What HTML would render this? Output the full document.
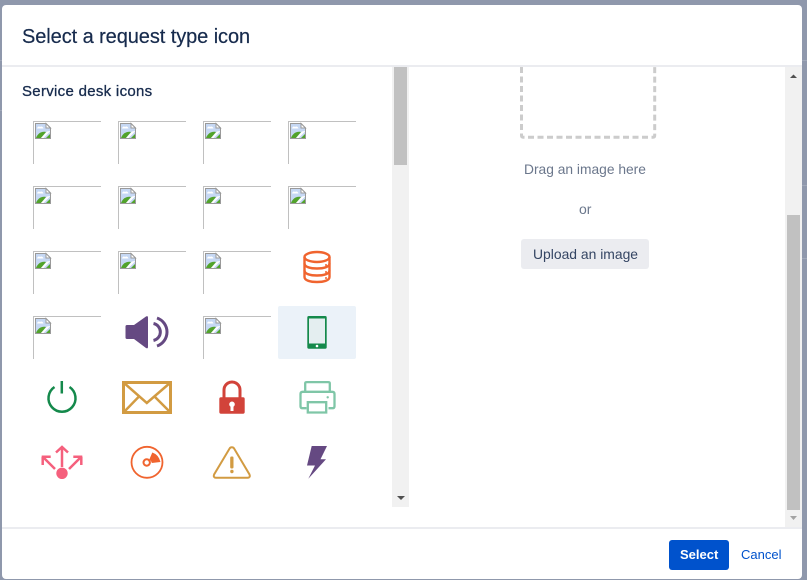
<!DOCTYPE html>
<html lang="en">
<head>
<meta charset="utf-8">
<title>Select a request type icon</title>
<style>
html,body{margin:0;padding:0;width:807px;height:580px;overflow:hidden;background:#8f98ac;font-family:"Liberation Sans",sans-serif}
.abs{position:absolute;white-space:nowrap}
#modal{position:absolute;left:2px;top:5px;width:800px;height:574px;background:#fff;border-radius:4px}
svg#art{position:absolute;left:0;top:0}
</style>
</head>
<body>
<div class="abs" style="left:0;top:60px;width:2px;height:1px;background:#a0a8b9"></div>
<div class="abs" style="left:0;top:110px;width:2px;height:1px;background:#a0a8b9"></div>
<div class="abs" style="left:802px;top:60px;width:5px;height:1px;background:#a0a8b9"></div>
<div class="abs" style="left:802px;top:185px;width:5px;height:1px;background:#a0a8b9"></div>
<div class="abs" style="left:802px;top:258px;width:5px;height:1px;background:#a0a8b9"></div>
<div id="modal"></div>

<svg id="art" width="807" height="580" viewBox="0 0 807 580" xmlns="http://www.w3.org/2000/svg">
<defs>
<g id="broken">
  <path d="M.5 43V.5H68" fill="none" stroke="#c0c0c0"/>
  <g transform="translate(2,2)">
    <path d="M.5.5H11L15.500 5V15.500H.5Z" fill="#c6d8f4" stroke="#9a9a9a"/>
    <path d="M11 .5V5H15.500Z" fill="#fff" stroke="#9a9a9a"/>
    <path d="M2 5.500c.5-2 2-2.500 3-1.500c1-1 3-.5 3.500 1.500Z" fill="#fff"/>
    <path d="M1 15c1.500-4 5-7 10-6l-5 6Z" fill="#52a32c"/>
    <path d="M6 15l6-6.500 3-.5v.5l-6.500 6.500Z" fill="#fff"/>
    <path d="M11 15l4-4v4Z" fill="#52a32c"/>
  </g>
</g>
</defs>

<!-- dividers -->
<rect x="2" y="65" width="800" height="2" fill="#ebecf0"/>
<rect x="2" y="527" width="800" height="2" fill="#ebecf0"/>

<!-- left scrollbar -->
<rect x="392" y="67" width="17" height="440" fill="#f1f1f1"/>
<rect x="394" y="67" width="13" height="98" fill="#c1c1c1"/>
<path d="M397 496h8l-4 4Z" fill="#505050"/>

<!-- right scrollbar -->
<rect x="785" y="67" width="17" height="460" fill="#f1f1f1"/>
<rect x="787" y="215" width="13" height="295" fill="#c1c1c1"/>
<path d="M790 78h7l-3.500-3.500Z" fill="#505050"/>
<path d="M790 516h7l-3.500 4Z" fill="#a3a3a3"/>

<!-- selected cell -->
<rect x="278" y="306" width="78" height="53" rx="2" fill="#ebf2f9"/>

<!-- broken images -->
<use href="#broken" x="33" y="121"/><use href="#broken" x="118" y="121"/><use href="#broken" x="203" y="121"/><use href="#broken" x="288" y="121"/>
<use href="#broken" x="33" y="186"/><use href="#broken" x="118" y="186"/><use href="#broken" x="203" y="186"/><use href="#broken" x="288" y="186"/>
<use href="#broken" x="33" y="251"/><use href="#broken" x="118" y="251"/><use href="#broken" x="203" y="251"/>
<use href="#broken" x="33" y="316"/><use href="#broken" x="203" y="316"/>

<!-- database -->
<g fill="none" stroke="#f0642f" stroke-width="2.400">
  <ellipse cx="317" cy="257" rx="12.500" ry="5"/>
  <path d="M304.500 257V277c0 3.500 6 5 12.500 5S329.500 280.500 329.500 277V257"/>
  <path d="M304.500 263.500c0 3.500 6 5 12.500 5S329.500 267 329.500 263.500"/>
  <path d="M304.500 270.500c0 3.500 6 5 12.500 5S329.500 274 329.500 270.500"/>
</g>
<g fill="#f0642f"><circle cx="326" cy="265" r="1"/><circle cx="326" cy="272" r="1"/><circle cx="326" cy="278" r="1"/></g>

<!-- speaker -->
<path d="M127 325H134L146 316.500q2-1 2 1V347q0 2-2 1L134 339H127q-1.500 0-1.500-1.500V326.500q0-1.500 1.500-1.500Z" fill="#654982"/>
<g fill="none" stroke="#654982" stroke-width="3">
  <path d="M153.500 323.500A8.700 8.700 0 0 1 153.500 340.500"/>
  <path d="M157 318A14.800 14.800 0 0 1 157 346"/>
</g>

<!-- phone -->
<rect x="307.300" y="316" width="19.400" height="32.700" rx="1.500" fill="#14894b"/>
<rect x="309" y="318.500" width="16" height="25" fill="#e4eef0"/>
<circle cx="317" cy="346" r="1.300" fill="#fff"/>

<!-- power -->
<path d="M54.500 387a13.500 13.500 0 1 0 15 0" fill="none" stroke="#14894b" stroke-width="2.500"/>
<path d="M61.800 381V393.500" stroke="#14894b" stroke-width="2.500"/>

<!-- envelope -->
<g fill="none" stroke="#d29b42">
  <rect x="123.500" y="382.500" width="47" height="30" stroke-width="3"/>
  <path d="M123.500 382.500L146.800 403L170.500 382.500" stroke-width="2.500"/>
  <path d="M123.500 412.500L138.500 397M170.500 412.500L155 397" stroke-width="2.500"/>
</g>

<!-- lock -->
<path d="M224 398V390a8 8 0 0 1 16 0V398" fill="none" stroke="#d2433a" stroke-width="3"/>
<path d="M221 397.300h22q1.700 0 1.700 1.700v13q0 1.700-1.700 1.700h-22q-1.700 0-1.700-1.700V399q0-1.700 1.700-1.700Z" fill="#d2433a"/>
<circle cx="232" cy="404.300" r="2.800" fill="#fff"/>
<rect x="230.500" y="405" width="3" height="6" fill="#fff"/>

<!-- printer -->
<g fill="none" stroke="#7fc6a7" stroke-width="2.300">
  <path d="M305.200 391v-7.500q0-1.400 1.400-1.400h21.800q1.400 0 1.400 1.400V391"/>
  <path d="M306.500 408.200h-4q-2 0-2-2V394q0-2.200 2.200-2.200h29.600q2.200 0 2.200 2.200v12.200q0 2-2 2h-4"/>
  <path d="M307.800 412.500V402.200h18.400v10.300Z"/>
</g>
<circle cx="327.700" cy="397.300" r="1.200" fill="#7fc6a7"/>

<!-- arrows -->
<g fill="none" stroke="#f5607d" stroke-width="2.500">
  <path d="M62 447.500V467"/>
  <path d="M56 452.500L62 447L68 452.500"/>
  <path d="M41.700 456.700H50.700M42.700 456.700V465M43.500 457.500L55 469"/>
  <path d="M82.300 456.700H73.300M81.300 456.700V465M80.500 457.500L69 469"/>
</g>
<circle cx="62" cy="473.300" r="5.700" fill="#f5607d"/>

<!-- disc -->
<circle cx="147" cy="462.300" r="15.500" fill="none" stroke="#f0642f" stroke-width="1.800"/>
<circle cx="146.700" cy="462.500" r="3.200" fill="none" stroke="#f0642f" stroke-width="2"/>
<path d="M149.300 459.500L152.300 452.500Q158.500 454.500 160.500 462L151.800 463Q151.300 460.800 149.300 459.500Z" fill="#f0642f"/>

<!-- warning -->
<path d="M229.600 448.500a2.700 2.700 0 0 1 4.500 0l15.400 26q1.200 3-1.800 3.300h-31.800q-3-.3-1.800-3.300Z" fill="none" stroke="#d29b42" stroke-width="2"/>
<rect x="230.200" y="456.500" width="3.300" height="12" rx="1.200" fill="#d29b42"/>
<circle cx="231.900" cy="471.500" r="1.700" fill="#d29b42"/>

<!-- bolt -->
<path d="M311.700 446H327L320.500 459.300H326L308.300 478.700L315 465.500H307Z" fill="#654982"/>

<!-- dashed upload box -->
<path d="M521.500 67V135.500q0 1.700 1.700 1.700H653q1.700 0 1.700-1.700V67" fill="none" stroke="#ccc" stroke-width="3" stroke-dasharray="6 3.500"/>

<!-- buttons -->
<rect x="521" y="239" width="128" height="30" rx="3" fill="#ebecf0"/>
<rect x="669" y="540" width="60" height="30" rx="3" fill="#0052cc"/>
</svg>

<div class="abs" style="left:22px;top:25px;font-size:20px;line-height:24px;color:#172b4d;letter-spacing:-.08px;-webkit-text-stroke:.2px #172b4d">Select a request type icon</div>
<div class="abs" style="left:22px;top:83px;font-size:15px;line-height:18px;color:#172b4d;letter-spacing:.3px;-webkit-text-stroke:.3px #172b4d">Service desk icons</div>
<div class="abs" style="left:524px;top:161px;font-size:13.800px;line-height:18px;color:#6b778c;">Drag an image here</div>
<div class="abs" style="left:579px;top:200px;font-size:14px;line-height:18px;color:#6b778c">or</div>
<div class="abs" style="left:533px;top:245px;font-size:13.900px;line-height:18px;color:#344563">Upload an image</div>
<div class="abs" style="left:680px;top:546px;font-size:13px;line-height:18px;color:#fff;font-weight:bold">Select</div>
<div class="abs" style="left:741px;top:546px;font-size:13px;line-height:18px;color:#0052cc">Cancel</div>
</body>
</html>
